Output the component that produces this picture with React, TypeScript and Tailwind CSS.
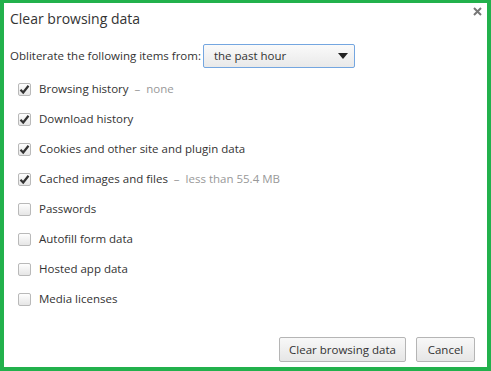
import { useState } from "react";

const items = [
  { label: "Browsing history", note: "none", checked: true },
  { label: "Download history", checked: true },
  { label: "Cookies and other site and plugin data", checked: true },
  { label: "Cached images and files", note: "less than 55.4 MB", checked: true },
  { label: "Passwords", checked: false },
  { label: "Autofill form data", checked: false },
  { label: "Hosted app data", checked: false },
  { label: "Media licenses", checked: false },
];

function Checkbox({ checked }: { checked: boolean }) {
  return (
    <span className="w-[13px] h-[13px] rounded-[2px] border border-[#b9b9b9] bg-gradient-to-b from-[#fefefe] to-[#e6e6e6] flex items-center justify-center shrink-0">
      {checked && (
        <svg width="11" height="11" viewBox="0 0 11 11">
          <path d="M1.5 5.8 L4.2 8.5 L9.5 1.8" fill="none" stroke="#333" strokeWidth="2.2" />
        </svg>
      )}
    </span>
  );
}

export default function App() {
  const [rows] = useState(items);

  return (
    <div
      className="w-[491px] h-[371px] bg-[#22b14c] pt-[3px] pl-[4px] pr-[4px] pb-[4px]"
      style={{ fontFamily: '"Open Sans", "Noto Sans", sans-serif' }}
    >
      <div className="relative h-full bg-white flex flex-col text-[#333]">
        {/* close */}
        <svg className="absolute right-[5px] top-[4px]" width="9" height="9" viewBox="0 0 9 9">
          <path d="M1 1 L8 8 M8 1 L1 8" stroke="#777" strokeWidth="2" />
        </svg>

        <div className="pl-[6px] pt-[7px] text-[14px] leading-[18px] text-[#333]">Clear browsing data</div>

        <div className="flex items-center pl-[6px] mt-[16px] text-[11.5px]">
          <span>Obliterate the following items from:</span>
          <div className="ml-[2px] w-[152px] h-[24px] border border-[#74a6e0] rounded-[2px] bg-gradient-to-b from-[#fafafa] to-[#e9e9e9] flex items-center pl-[10px] pr-[6px]">
            <span className="flex-1 text-[11.5px]">the past hour</span>
            <svg width="10" height="6" viewBox="0 0 10 6">
              <path d="M0 0 L10 0 L5 6 Z" fill="#222" />
            </svg>
          </div>
        </div>

        <div className="flex flex-col mt-[6px] pl-[14px] text-[11.5px]">
          {rows.map((r) => (
            <div key={r.label} className="h-[30px] flex items-center gap-[8px]">
              <Checkbox checked={r.checked} />
              <span>
                {r.label}
                {r.note && <span className="text-[#999]">&nbsp; –&nbsp; {r.note}</span>}
              </span>
            </div>
          ))}
        </div>

        <div className="mt-auto mb-[5px] mr-[12px] flex justify-end gap-[10px] text-[11.5px]">
          <button className="h-[25px] w-[127px] border border-[#b5b5b5] rounded-[2px] bg-gradient-to-b from-[#f8f8f8] to-[#e6e6e6] text-[#333]">
            Clear browsing data
          </button>
          <button className="h-[25px] w-[59px] border border-[#b5b5b5] rounded-[2px] bg-gradient-to-b from-[#f8f8f8] to-[#e6e6e6] text-[#333]">
            Cancel
          </button>
        </div>
      </div>
    </div>
  );
}
